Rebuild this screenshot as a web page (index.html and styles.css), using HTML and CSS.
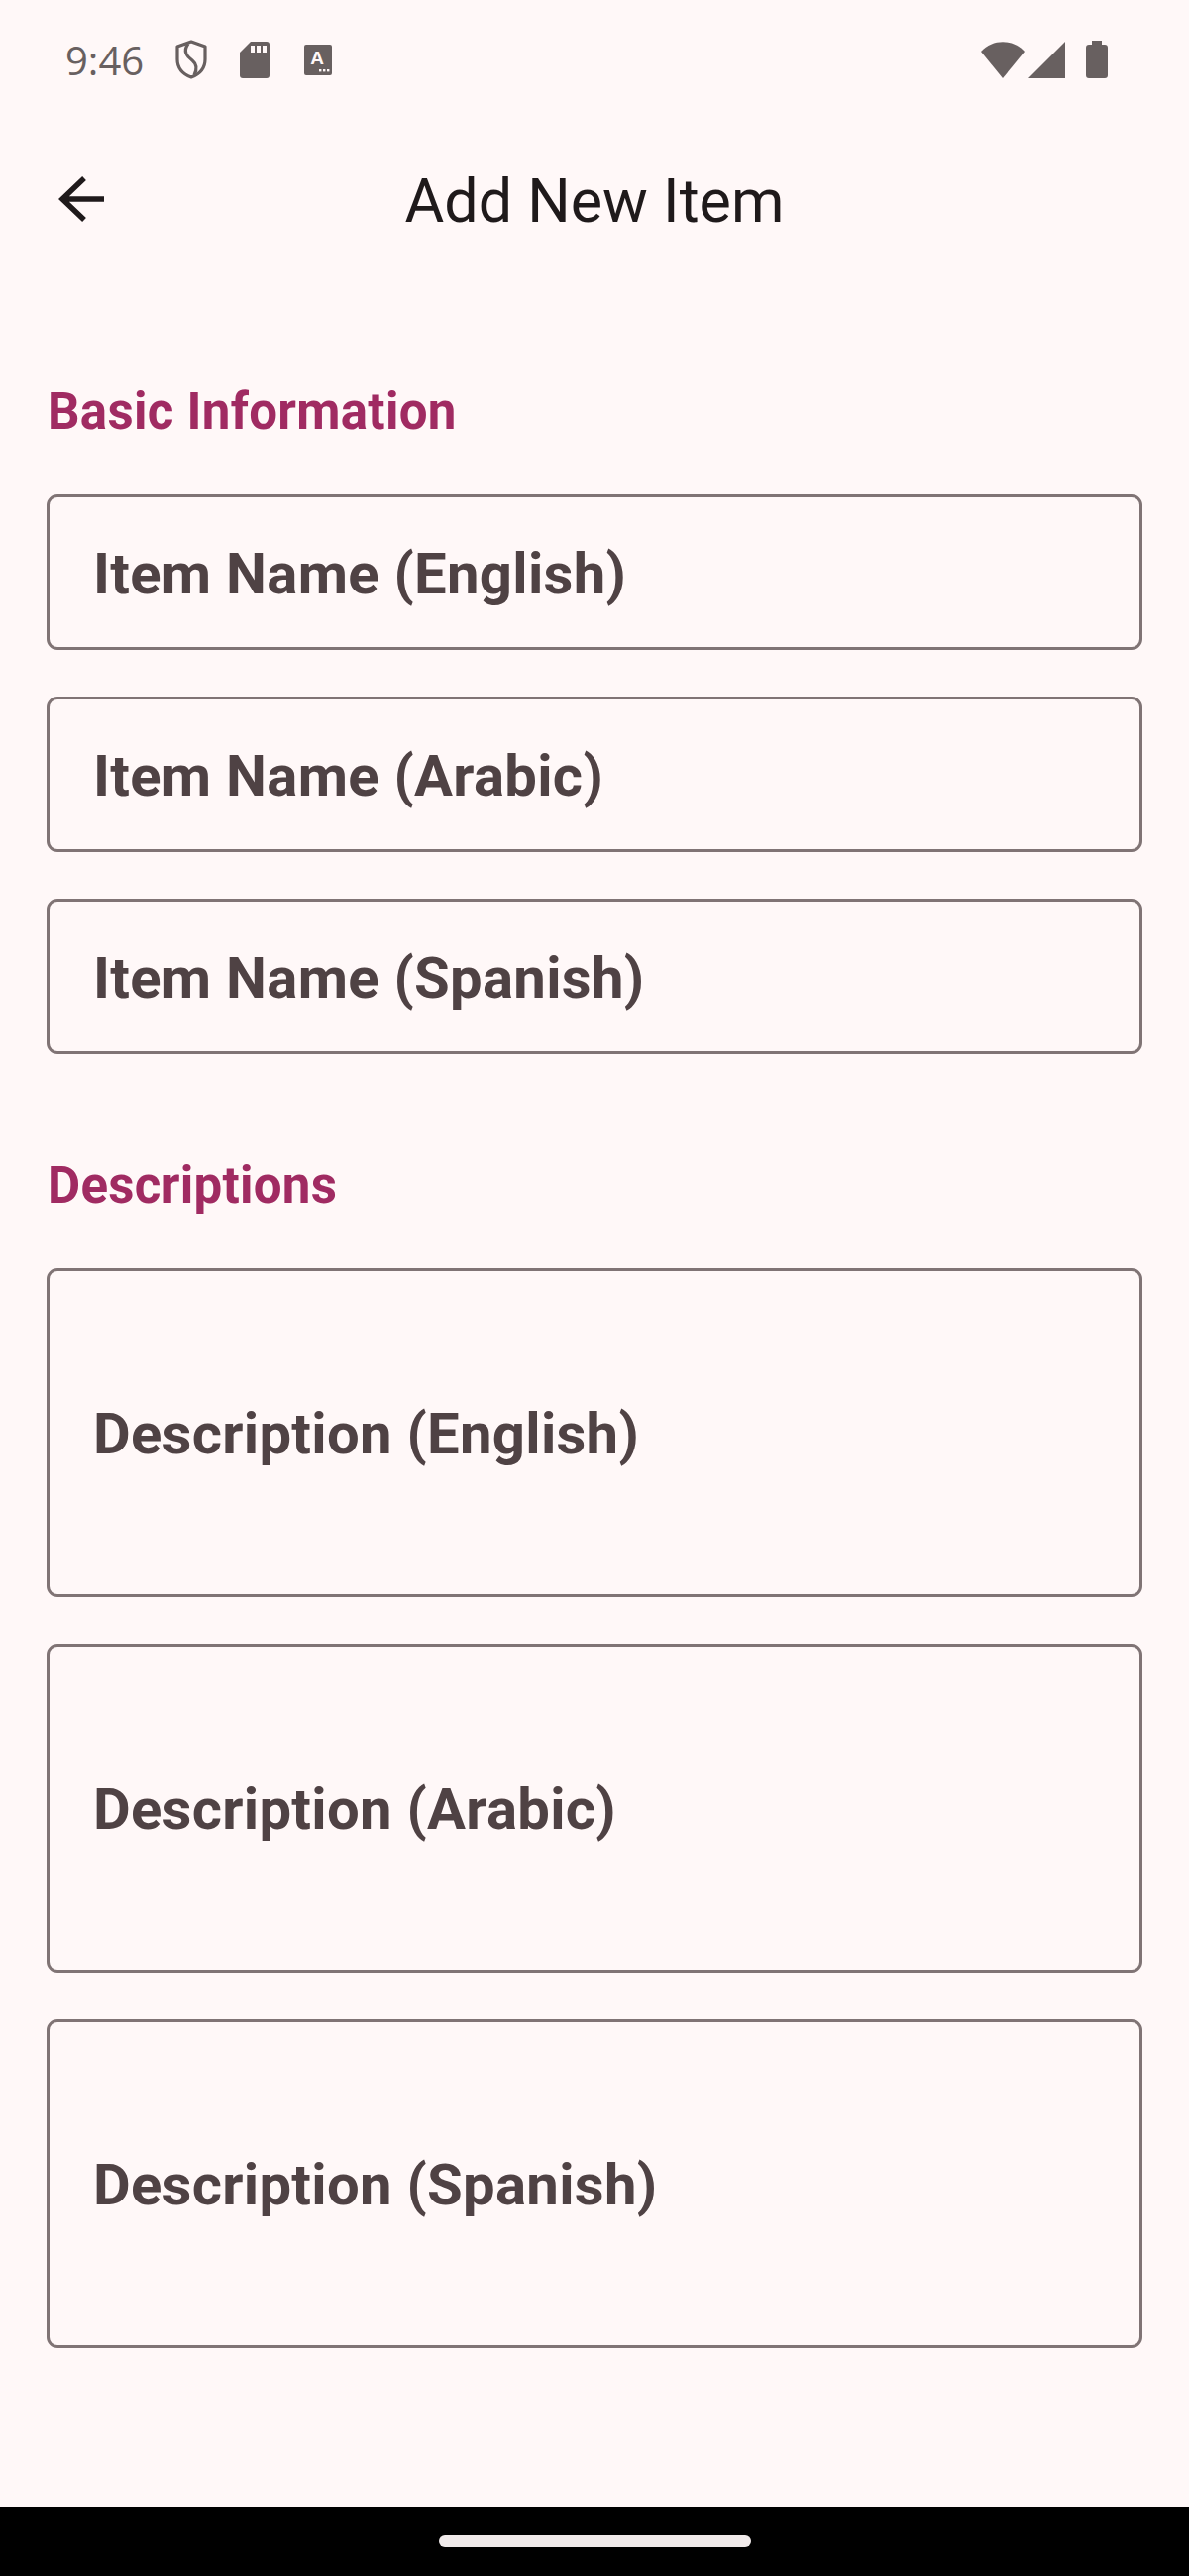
FILE: index.html
```html
<!DOCTYPE html>
<html lang="en">
<head>
    <meta charset="UTF-8">
    <meta name="viewport" content="width=device-width, initial-scale=1.0">
    <title>Add New Item</title>
    <link rel="stylesheet" href="styles.css">
</head>
<body>
    <div class="screen">
        <div class="status-bar">
            <div class="status-left">
                <span class="clock">9:46</span>
                <svg class="icon-shield" viewBox="0 0 32 40"><path d="M16 2 L30 7 V20 C30 29 24 35 16 38 C8 35 2 29 2 20 V7 Z" fill="none" stroke="#686060" stroke-width="3.2" stroke-linejoin="round"/><path d="M13 4 C7 12 12 17 17 21 C22 25 22 30 19 36" fill="none" stroke="#686060" stroke-width="3.2"/></svg>
                <svg class="icon-sd" viewBox="0 0 30 37"><path d="M11 0 H27 Q30 0 30 3 V34 Q30 37 27 37 H3 Q0 37 0 34 V11 Z" fill="#686060"/><rect x="11" y="4" width="4" height="7" fill="#fff8f8"/><rect x="17" y="4" width="4" height="7" fill="#fff8f8"/><rect x="23" y="4" width="4" height="7" fill="#fff8f8"/></svg>
                <svg class="icon-a" viewBox="0 0 28 31"><rect width="28" height="31" rx="2" fill="#686060"/><text x="13" y="20" text-anchor="middle" class="icon-a-letter">A</text><rect x="15" y="25" width="2.4" height="2.4" fill="#fff8f8"/><rect x="19" y="25" width="2.4" height="2.4" fill="#fff8f8"/><rect x="23" y="25" width="2.4" height="2.4" fill="#fff8f8"/></svg>
            </div>
            <div class="status-right">
                <svg class="icon-wifi" viewBox="0 0 44 37"><path d="M22 37 L0 10 C12 -3 32 -3 44 10 Z" fill="#686060"/></svg>
                <svg class="icon-signal" viewBox="0 0 37 37"><path d="M37 0 V37 H0 Z" fill="#686060"/></svg>
                <svg class="icon-battery" viewBox="0 0 22 38"><path d="M6 0 H16 V4 H19 Q22 4 22 7 V35 Q22 38 19 38 H3 Q0 38 0 35 V7 Q0 4 3 4 H6 Z" fill="#686060"/></svg>
            </div>
        </div>

        <div class="app-bar">
            <svg class="back-arrow" viewBox="0 0 46 46"><path d="M46 23 H4 M26 2 L4 23 L26 44" fill="none" stroke="#1f1a1b" stroke-width="5.5"/></svg>
            <h1>Add New Item</h1>
        </div>

        <div class="content">
            <h2 class="section-title">Basic Information</h2>
            <div class="field-list">
                <div class="field">Item Name (English)</div>
                <div class="field">Item Name (Arabic)</div>
                <div class="field">Item Name (Spanish)</div>
            </div>

            <h2 class="section-title section-second">Descriptions</h2>
            <div class="field-list">
                <div class="field field-tall">Description (English)</div>
                <div class="field field-tall">Description (Arabic)</div>
                <div class="field field-tall">Description (Spanish)</div>
            </div>
        </div>

        <div class="nav-bar">
            <div class="nav-pill"></div>
        </div>
    </div>
</body>
</html>
```

FILE: styles.css
```css
body {
    margin: 0;
    background-color: #fff8f8;
    font-family: Roboto, "Noto Sans", sans-serif;
}
.screen {
    display: flex;
    flex-direction: column;
    height: 2600px;
    overflow: hidden;
}
.status-bar {
    display: flex;
    justify-content: space-between;
    align-items: center;
    height: 120px;
    padding: 0 82px 0 66px;
    box-sizing: border-box;
}
.status-left, .status-right {
    display: flex;
    align-items: center;
}
.clock {
    font-family: "Open Sans", sans-serif;
    font-size: 40px;
    color: #686060;
    width: 111px;
}
.icon-shield { width: 32px; height: 40px; }
.icon-sd { width: 30px; height: 37px; margin-left: 33px; }
.icon-a { width: 28px; height: 31px; margin-left: 35px; }
.icon-a-letter {
    font-family: "Liberation Sans", sans-serif;
    font-weight: 700;
    font-size: 19px;
    fill: #fff8f8;
}
.icon-wifi { width: 44px; height: 37px; }
.icon-signal { width: 37px; height: 37px; margin-left: 4px; }
.icon-battery { width: 22px; height: 38px; margin-left: 21px; }
.app-bar {
    position: relative;
    display: flex;
    align-items: center;
    justify-content: center;
    height: 162px;
}
.app-bar h1 {
    margin: 0;
    padding-top: 3px;
    font-weight: 400;
    font-size: 61px;
    color: #1f1a1b;
}
.back-arrow {
    position: absolute;
    left: 59px;
    top: 58px;
    width: 46px;
    height: 46px;
}
.content {
    flex: 1;
    padding: 101px 47px 0;
}
.section-title {
    margin: 0 0 50px;
    padding-left: 1px;
    font-size: 51px;
    font-weight: 700;
    letter-spacing: 0.3px;
    line-height: 66px;
    color: #a02b62;
}
.section-second {
    margin-top: 100px;
}
.field-list {
    display: flex;
    flex-direction: column;
    gap: 47px;
}
.field {
    display: flex;
    align-items: center;
    height: 157px;
    box-sizing: border-box;
    padding: 2px 0 0 44px;
    border: 3px solid #807475;
    border-radius: 11px;
    font-size: 58px;
    font-weight: 700;
    letter-spacing: 0.3px;
    color: #4f4244;
}
.field-tall {
    height: 332px;
}
.nav-bar {
    display: flex;
    justify-content: center;
    height: 70px;
    background-color: #000;
}
.nav-pill {
    width: 315px;
    height: 12px;
    margin-top: 29px;
    border-radius: 6px;
    background-color: #f0eaea;
}
```
